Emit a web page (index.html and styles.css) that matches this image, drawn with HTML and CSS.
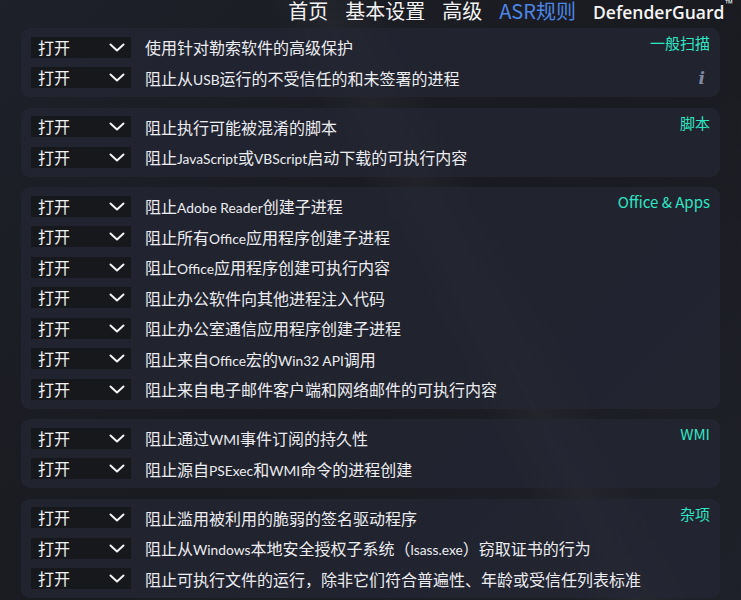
FILE: index.html
```html
<!DOCTYPE html>
<html lang="zh-CN">
<head>
<meta charset="utf-8">
<title>DefenderGuard - ASR规则</title>
<link rel="stylesheet" href="styles.css">
</head>
<body>
<div class="page">
  <header class="topbar">
    <nav class="nav">
      <span class="nav-item">首页</span>
      <span class="nav-item">基本设置</span>
      <span class="nav-item">高级</span>
      <span class="nav-item active">ASR规则</span>
      <span class="brand">DefenderGuard<sup class="tm">™</sup></span>
    </nav>
  </header>

  <main class="groups">
    <section class="card">
      <div class="row">
        <div class="select"><span>打开</span><svg class="chev" viewBox="0 0 16 9"><polyline points="1.5,1.5 8,7.5 14.5,1.5"/></svg></div>
        <span class="rule">使用针对勒索软件的高级保护</span>
        <span class="cat">一般扫描</span>
      </div>
      <div class="row">
        <div class="select"><span>打开</span><svg class="chev" viewBox="0 0 16 9"><polyline points="1.5,1.5 8,7.5 14.5,1.5"/></svg></div>
        <span class="rule">阻止从<span class="en">USB</span>运行的不受信任的和未签署的进程</span>
        <span class="info">i</span>
      </div>
    </section>

    <section class="card">
      <div class="row">
        <div class="select"><span>打开</span><svg class="chev" viewBox="0 0 16 9"><polyline points="1.5,1.5 8,7.5 14.5,1.5"/></svg></div>
        <span class="rule">阻止执行可能被混淆的脚本</span>
        <span class="cat">脚本</span>
      </div>
      <div class="row">
        <div class="select"><span>打开</span><svg class="chev" viewBox="0 0 16 9"><polyline points="1.5,1.5 8,7.5 14.5,1.5"/></svg></div>
        <span class="rule">阻止<span class="en">JavaScript</span>或<span class="en">VBScript</span>启动下载的可执行内容</span>
      </div>
    </section>

    <section class="card">
      <div class="row">
        <div class="select"><span>打开</span><svg class="chev" viewBox="0 0 16 9"><polyline points="1.5,1.5 8,7.5 14.5,1.5"/></svg></div>
        <span class="rule">阻止<span class="en">Adobe Reader</span>创建子进程</span>
        <span class="cat">Office &amp; Apps</span>
      </div>
      <div class="row">
        <div class="select"><span>打开</span><svg class="chev" viewBox="0 0 16 9"><polyline points="1.5,1.5 8,7.5 14.5,1.5"/></svg></div>
        <span class="rule">阻止所有<span class="en">Office</span>应用程序创建子进程</span>
      </div>
      <div class="row">
        <div class="select"><span>打开</span><svg class="chev" viewBox="0 0 16 9"><polyline points="1.5,1.5 8,7.5 14.5,1.5"/></svg></div>
        <span class="rule">阻止<span class="en">Office</span>应用程序创建可执行内容</span>
      </div>
      <div class="row">
        <div class="select"><span>打开</span><svg class="chev" viewBox="0 0 16 9"><polyline points="1.5,1.5 8,7.5 14.5,1.5"/></svg></div>
        <span class="rule">阻止办公软件向其他进程注入代码</span>
      </div>
      <div class="row">
        <div class="select"><span>打开</span><svg class="chev" viewBox="0 0 16 9"><polyline points="1.5,1.5 8,7.5 14.5,1.5"/></svg></div>
        <span class="rule">阻止办公室通信应用程序创建子进程</span>
      </div>
      <div class="row">
        <div class="select"><span>打开</span><svg class="chev" viewBox="0 0 16 9"><polyline points="1.5,1.5 8,7.5 14.5,1.5"/></svg></div>
        <span class="rule">阻止来自<span class="en">Office</span>宏的<span class="en">Win32 API</span>调用</span>
      </div>
      <div class="row">
        <div class="select"><span>打开</span><svg class="chev" viewBox="0 0 16 9"><polyline points="1.5,1.5 8,7.5 14.5,1.5"/></svg></div>
        <span class="rule">阻止来自电子邮件客户端和网络邮件的可执行内容</span>
      </div>
    </section>

    <section class="card">
      <div class="row">
        <div class="select"><span>打开</span><svg class="chev" viewBox="0 0 16 9"><polyline points="1.5,1.5 8,7.5 14.5,1.5"/></svg></div>
        <span class="rule">阻止通过<span class="en">WMI</span>事件订阅的持久性</span>
        <span class="cat">WMI</span>
      </div>
      <div class="row">
        <div class="select"><span>打开</span><svg class="chev" viewBox="0 0 16 9"><polyline points="1.5,1.5 8,7.5 14.5,1.5"/></svg></div>
        <span class="rule">阻止源自<span class="en">PSExec</span>和<span class="en">WMI</span>命令的进程创建</span>
      </div>
    </section>

    <section class="card">
      <div class="row">
        <div class="select"><span>打开</span><svg class="chev" viewBox="0 0 16 9"><polyline points="1.5,1.5 8,7.5 14.5,1.5"/></svg></div>
        <span class="rule">阻止滥用被利用的脆弱的签名驱动程序</span>
        <span class="cat">杂项</span>
      </div>
      <div class="row">
        <div class="select"><span>打开</span><svg class="chev" viewBox="0 0 16 9"><polyline points="1.5,1.5 8,7.5 14.5,1.5"/></svg></div>
        <span class="rule">阻止从<span class="en">Windows</span>本地安全授权子系统（<span class="en">lsass.exe</span>）窃取证书的行为</span>
      </div>
      <div class="row">
        <div class="select"><span>打开</span><svg class="chev" viewBox="0 0 16 9"><polyline points="1.5,1.5 8,7.5 14.5,1.5"/></svg></div>
        <span class="rule">阻止可执行文件的运行，除非它们符合普遍性、年龄或受信任列表标准</span>
      </div>
    </section>
  </main>
</div>
</body>
</html>
```

FILE: styles.css
```css
* { box-sizing: border-box; }

html, body {
  margin: 0;
  padding: 0;
  height: 100%;
}

body {
  background-color: #1a1b20;
  background-image:
    linear-gradient(62deg, rgba(255,255,255,0) 55%, rgba(255,255,255,0.035) 60%, rgba(255,255,255,0) 66%),
    linear-gradient(135deg, rgba(40,48,70,0.25) 0%, rgba(26,27,32,0) 50%, rgba(45,50,70,0.25) 100%);
  color: #ececf0;
  font-family: "Noto Sans CJK SC", "Noto Sans", sans-serif;
  overflow: hidden;
}

.page {
  width: 741px;
  height: 600px;
  overflow: hidden;
}

.topbar {
  height: 28px;
  display: flex;
  justify-content: flex-end;
  padding-right: 8px;
}

.nav {
  display: flex;
  align-items: flex-start;
  gap: 17px;
  font-size: 20px;
  line-height: 26px;
  margin-top: -2px;
}

.nav-item {
  color: #f2f2f2;
}

.nav-item.active {
  color: #4d86e6;
}

.brand {
  font-family: "Open Sans", "Noto Sans", sans-serif;
  font-weight: 600;
  font-size: 17.5px;
  line-height: 26px;
  color: #f4f4f4;
  padding-top: 1px;
}

.tm {
  font-size: 10px;
  font-weight: 400;
  vertical-align: top;
  line-height: 10px;
  position: relative;
  top: -1px;
  margin-left: 1px;
}

.groups {
  display: flex;
  flex-direction: column;
  gap: 10.5px;
  padding: 0 21px;
}

.card {
  background: rgba(36, 39, 52, 0.72);
  border-radius: 9px;
  padding: 4px 10px 4px 10px;
}

.row {
  height: 30.5px;
  display: flex;
  align-items: center;
}

.select {
  width: 100px;
  height: 21px;
  background: #17181c;
  display: flex;
  align-items: center;
  justify-content: space-between;
  padding: 0 6px 0 7px;
  font-size: 16px;
  line-height: 21px;
  color: #f2f2f2;
  flex: none;
}

.chev {
  width: 16px;
  height: 9px;
  fill: none;
  stroke: #f4f4f4;
  stroke-width: 2;
  stroke-linecap: round;
  stroke-linejoin: round;
}

.rule {
  margin-left: 14px;
  font-size: 16px;
  color: #ececf0;
  white-space: nowrap;
}

.en {
  font-family: "Lato", "Noto Sans", sans-serif;
  font-size: 13.8px;
}

.cat {
  margin-left: auto;
  align-self: flex-start;
  margin-top: 1px;
  font-size: 15px;
  line-height: 20px;
  color: #2fe6c4;
}

.info {
  margin-left: auto;
  margin-right: 5px;
  font-family: "DejaVu Serif", serif;
  font-style: italic;
  font-weight: 700;
  font-size: 17px;
  color: #7f8ba3;
}
```
